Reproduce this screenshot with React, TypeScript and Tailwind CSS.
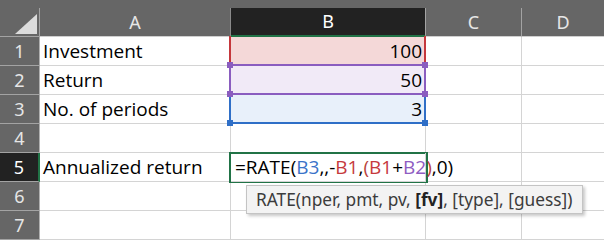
const CELL_FONT = "font-['Open_Sans','Liberation_Sans',sans-serif]";
const UI_FONT = "font-['Noto_Sans','Liberation_Sans',sans-serif]";

type Row = {
  n: number;
  a?: string;
  b?: string;
  bFill?: string;
};

const ROWS: Row[] = [
  { n: 1, a: "Investment", b: "100", bFill: "bg-[#f4d8d8]" },
  { n: 2, a: "Return", b: "50", bFill: "bg-[#f1eaf7]" },
  { n: 3, a: "No. of periods", b: "3", bFill: "bg-[#e8f0fa]" },
  { n: 4 },
  { n: 5, a: "Annualized return" },
  { n: 6 },
  { n: 7 },
];

const Handle = ({ x, y, color }: { x: number; y: number; color: string }) => (
  <div
    className={`absolute w-[6px] h-[6px] ${color}`}
    style={{ left: x - 3, top: y - 3 }}
  />
);

const Formula = () => (
  <span className="whitespace-nowrap text-black">
    =RATE(<span className="text-[#3a73c9]">B3</span>,,-
    <span className="text-[#c6393d]">B1</span>,
    <span className="text-[#b8433c]">(</span>
    <span className="text-[#c6393d]">B1</span>+
    <span className="text-[#8e5cc2]">B2</span>
    <span className="text-[#b8433c]">)</span>,0)
  </span>
);

export default function App() {
  return (
    <div className="relative w-[604px] h-[240px] overflow-hidden bg-white">
      {/* top strip */}
      <div className="h-[8px] bg-[#666666]" />

      {/* column headers */}
      <div className={`flex h-[29px] bg-[#666666] text-[18px] ${UI_FONT}`}>
        <div className="w-[40px] shrink-0 flex items-end justify-end pr-[2px] pb-[2px] border-r border-b border-[#a3a3a3]">
          <svg width="22" height="20" viewBox="0 0 22 20">
            <polygon points="22,0 22,20 0,20" fill="#dcdcdc" />
          </svg>
        </div>
        <div className="w-[191px] shrink-0 flex items-center justify-center border-r border-b border-r-[#8a8a8a] border-b-[#cfcfcf] text-[#e6e6e6]">
          A
        </div>
        <div className="w-[195px] shrink-0 flex items-center justify-center bg-[#222222] border-r border-r-[#a3a3a3] border-b-2 border-b-[#217346] text-white">
          B
        </div>
        <div className="w-[96px] shrink-0 flex items-center justify-center border-r border-b border-r-[#a3a3a3] border-b-[#cfcfcf] text-[#e6e6e6]">
          C
        </div>
        <div className="flex-1 flex items-center justify-center border-b border-[#cfcfcf] text-[#e6e6e6]">
          D
        </div>
      </div>

      {/* rows */}
      {ROWS.map((r) => {
        const active = r.n === 5;
        return (
          <div key={r.n} className="flex h-[29px]">
            <div
              className={`w-[40px] shrink-0 flex items-center justify-center border-b border-b-[#a3a3a3] text-[18px] ${UI_FONT} ${
                active
                  ? "bg-[#222222] text-white border-r-2 border-r-[#217346]"
                  : "bg-[#666666] text-[#e6e6e6] border-r border-r-[#b0b0b0]"
              }`}
            >
              {r.n}
            </div>
            <div
              className={`w-[191px] shrink-0 flex items-center pl-[3px] pt-[1px] border-r border-b border-[#d4d4d4] text-[19px] text-black ${CELL_FONT}`}
            >
              {r.a}
            </div>
            <div
              className={`w-[195px] shrink-0 flex items-center pr-[3px] pt-[1px] border-r border-b border-[#d4d4d4] text-[19px] ${CELL_FONT} ${
                r.bFill ?? ""
              } ${active ? "justify-start pl-[4px] relative z-10" : "justify-end"}`}
            >
              {active ? <Formula /> : r.b}
            </div>
            <div className="w-[96px] shrink-0 border-r border-b border-[#d4d4d4]" />
            <div className="flex-1 border-b border-[#d4d4d4]" />
          </div>
        );
      })}

      {/* range highlights */}
      <div className="absolute left-[229px] top-[93px] w-[197px] h-[31px] border-2 border-[#2f6fc7]" />
      <div className="absolute left-[229px] top-[36px] w-[197px] h-[30px] border-2 border-t-0 border-[#c5373c]" />
      <div className="absolute left-[229px] top-[64px] w-[197px] h-[31px] border-2 border-[#8a5dbf]" />
      <Handle x={230} y={65} color="bg-[#8a5dbf]" />
      <Handle x={425} y={65} color="bg-[#8a5dbf]" />
      <Handle x={230} y={94} color="bg-[#8a5dbf]" />
      <Handle x={425} y={94} color="bg-[#8a5dbf]" />
      <Handle x={230} y={123} color="bg-[#2f6fc7]" />
      <Handle x={425} y={123} color="bg-[#2f6fc7]" />

      {/* active cell */}
      <div className="absolute left-[229px] top-[152px] w-[199px] h-[31px] border-2 border-[#217346]" />

      {/* function tooltip */}
      <div
        className={`absolute left-[246px] top-[185px] w-[337px] h-[29px] flex items-center pl-[9px] bg-[#f3f3f3] border border-[#c4c4c4] shadow-[2px_2px_3px_rgba(0,0,0,0.22)] text-[17.3px] text-[#3c3c3c] whitespace-nowrap ${UI_FONT}`}
      >
        <span>
          RATE(nper, pmt, pv, <b className="font-bold text-[#222]">[fv]</b>, [type], [guess])
        </span>
      </div>
    </div>
  );
}
